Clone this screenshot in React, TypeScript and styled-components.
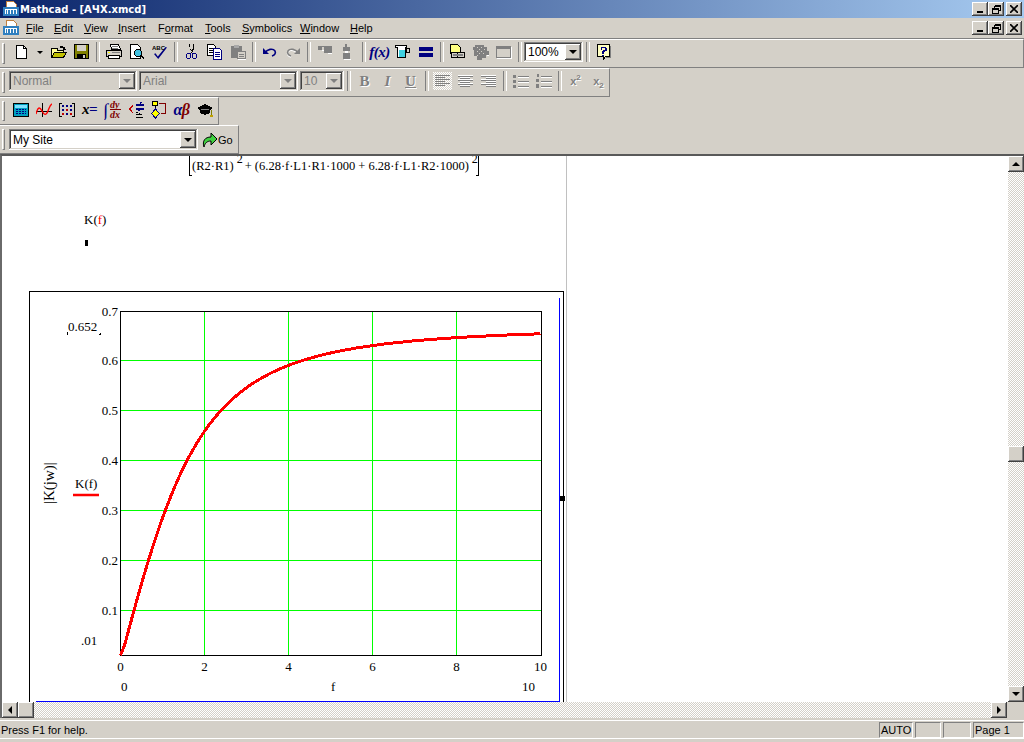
import React from 'react';
import styled, { createGlobalStyle, css } from 'styled-components';

const GlobalStyle = createGlobalStyle`
  html, body { margin: 0; padding: 0; background: #d4d0c8; overflow: hidden; }
  * { box-sizing: border-box; }
`;

const raised = css`
  box-shadow: inset -1px -1px #404040, inset 1px 1px #fff, inset -2px -2px #808080, inset 2px 2px #d4d0c8;
`;
const sunken = css`
  box-shadow: inset -1px -1px #fff, inset 1px 1px #808080, inset -2px -2px #d4d0c8, inset 2px 2px #404040;
`;
const dither = css`
  background-color: #fff;
  background-image: conic-gradient(#d4d0c8 25%, #fff 0 50%, #d4d0c8 0 75%, #fff 0);
  background-size: 2px 2px;
`;

const Window = styled.div`
  width: 1024px;
  height: 742px;
  display: flex;
  flex-direction: column;
  background: #d4d0c8;
  overflow: hidden;
  font-family: "Liberation Sans", Arial, sans-serif;
  font-size: 11px;
  color: #000;
`;

const TitleBar = styled.div`
  height: 18px;
  display: flex;
  align-items: center;
  padding: 0 2px 0 3px;
  background: linear-gradient(90deg, #0a246a, #a6caf0);
  color: #fff;
  font-family: "DejaVu Sans", sans-serif;
  font-size: 10px;
  font-weight: bold;
`;

const TitleText = styled.span`
  margin-left: 1px;
  flex: 1;
`;

const WinButtons = styled.div`
  display: flex;
`;

const WinButton = styled.div<{ $gap?: number }>`
  width: 16px;
  height: 14px;
  margin-left: ${p => p.$gap ?? 0}px;
  display: flex;
  align-items: center;
  justify-content: center;
  background: #d4d0c8;
  ${raised}
`;

const MenuBar = styled.div`
  height: 21px;
  display: flex;
  align-items: center;
  padding: 0 2px 0 3px;
  border-bottom: 1px solid #808080;
`;

const MenuIconSlot = styled.div`
  width: 23px;
  display: flex;
  flex: none;
`;

const MenuItem = styled.span<{ $w: number }>`
  width: ${p => p.$w}px;
  white-space: nowrap;
  u { text-decoration: underline; }
`;

const MenuSpacer = styled.div`
  flex: 1;
`;

const Toolbar = styled.div<{ $w?: number; $h?: number; $pb?: number }>`
  width: ${p => (p.$w ? `${p.$w}px` : '100%')};
  height: ${p => p.$h ?? 29}px;
  display: flex;
  align-items: center;
  padding-left: 9px;
  padding-bottom: ${p => p.$pb ?? 3}px;
  position: relative;
  border-top: 1px solid #fff;
  border-bottom: 1px solid #808080;
  border-right: 1px solid #808080;
`;

const Grip = styled.div`
  position: absolute;
  left: 2px;
  top: 3px;
  bottom: 3px;
  width: 3px;
  border-left: 1px solid #fff;
  border-top: 1px solid #fff;
  border-right: 1px solid #808080;
  border-bottom: 1px solid #808080;
`;

const TBtn = styled.div<{ $pressed?: boolean }>`
  width: 23px;
  height: 22px;
  display: flex;
  align-items: center;
  justify-content: center;
  flex: none;
  ${p => p.$pressed && css`
    ${dither}
    background-clip: content-box;
    padding: 2px;
  `}
`;

const DropArrow = styled.div`
  width: 15px;
  height: 22px;
  display: flex;
  align-items: center;
  justify-content: center;
  flex: none;
  &::before {
    content: '';
    border-left: 3px solid transparent;
    border-right: 3px solid transparent;
    border-top: 3px solid #000;
  }
`;

const Sep = styled.div`
  width: 9px;
  height: 22px;
  flex: none;
  position: relative;
  &::before {
    content: '';
    position: absolute;
    left: 3px;
    top: 1px;
    bottom: 1px;
    width: 2px;
    border-left: 1px solid #808080;
    border-right: 1px solid #fff;
  }
`;

const Combo = styled.div<{ $w: number; $on?: boolean; $ml?: number; $h?: number }>`
  width: ${p => p.$w}px;
  height: ${p => p.$h ?? 20}px;
  flex: none;
  margin-left: ${p => p.$ml ?? 0}px;
  display: flex;
  align-items: center;
  padding: 2px;
  background: ${p => (p.$on ? '#fff' : '#d4d0c8')};
  color: ${p => (p.$on ? '#000' : '#808080')};
  ${sunken}
`;

const ComboText = styled.span`
  flex: 1;
  padding-left: 2px;
  font-size: 12px;
  white-space: nowrap;
  overflow: hidden;
`;

const ComboArrow = styled.div<{ $on?: boolean }>`
  width: 16px;
  height: 100%;
  flex: none;
  display: flex;
  align-items: center;
  justify-content: center;
  background: #d4d0c8;
  ${raised}
  &::before {
    content: '';
    border-left: 4px solid transparent;
    border-right: 4px solid transparent;
    border-top: 4px solid ${p => (p.$on ? '#000' : '#808080')};
  }
`;

const GoLabel = styled.div`
  display: flex;
  align-items: center;
  margin-left: 4px;
`;

const FmtText = styled.span<{ $i?: boolean; $u?: boolean }>`
  font-family: "Liberation Serif", serif;
  font-size: 15px;
  font-weight: bold;
  font-style: ${p => (p.$i ? 'italic' : 'normal')};
  text-decoration: ${p => (p.$u ? 'underline' : 'none')};
  color: #808080;
  text-shadow: 1px 1px 0 #fff;
`;

const SupText = styled.span`
  font-family: "Liberation Sans", sans-serif;
  font-size: 11px;
  font-weight: bold;
  color: #808080;
  text-shadow: 1px 1px 0 #fff;
  sup, sub { font-size: 8px; line-height: 0; }
`;

const MathIconText = styled.span<{ $c?: string; $s?: number }>`
  font-family: "Liberation Serif", serif;
  font-size: ${p => p.$s ?? 15}px;
  font-weight: bold;
  font-style: italic;
  color: ${p => p.$c ?? '#000080'};
  white-space: nowrap;
  letter-spacing: -0.5px;
`;

const Tint = styled.span<{ $c: string }>`
  color: ${p => p.$c};
`;

const Workspace = styled.div`
  height: 548px;
  display: flex;
  border-top: 2px solid #595959;
  border-left: 2px solid #6a6a6a;
`;

const Sheet = styled.div`
  flex: 1;
  position: relative;
  background: #fff;
  overflow: hidden;
  font-family: "Liberation Serif", serif;
  font-size: 12.5px;
`;

const PageLine = styled.div`
  position: absolute;
  left: 564px;
  top: 0;
  bottom: 0;
  width: 1px;
  background: #c0c0c0;
`;

const Formula = styled.div`
  position: absolute;
  left: 187px;
  top: -1px;
  width: 290px;
  height: 21px;
  border-left: 1px solid #000;
  border-right: 1px solid #000;
  border-bottom: 1px solid #000;
`;

const FormulaInner = styled.div`
  position: absolute;
  left: 2px;
  top: 3px;
  width: 284px;
  height: 18px;
  white-space: nowrap;
  background: #fff;
  line-height: 17px;
  box-shadow: 0 2px 0 #fff;
`;

const FormulaPower = styled.span`
  font-size: 12px;
  position: relative;
  top: -7px;
  margin: 0 2px 0 3px;
`;

const MathLine = styled.div`
  position: absolute;
  left: 82px;
  top: 56px;
  font-size: 13px;
  em { color: #f00; font-style: normal; }
`;

const Cursor = styled.div`
  position: absolute;
  left: 83px;
  top: 84px;
  width: 3px;
  height: 6px;
  background: #000;
`;

const PlotSvg = styled.svg`
  position: absolute;
  left: 27px;
  top: 135px;
  overflow: visible;
`;

const VScroll = styled.div`
  width: 16px;
  flex: none;
  position: relative;
  ${dither}
  display: flex;
  flex-direction: column;
  justify-content: space-between;
`;

const ScrollThumb = styled.div`
  position: absolute;
  left: 0;
  top: 290px;
  width: 16px;
  height: 16px;
  background: #d4d0c8;
  ${raised}
`;

const Arrow = styled.div<{ $dir: 'up' | 'down' | 'left' | 'right' }>`
  width: 16px;
  height: 16px;
  flex: none;
  display: flex;
  align-items: center;
  justify-content: center;
  background: #d4d0c8;
  ${raised}
  &::before {
    content: '';
    ${p => p.$dir === 'up' && css`border-left: 4px solid transparent; border-right: 4px solid transparent; border-bottom: 4px solid #000;`}
    ${p => p.$dir === 'down' && css`border-left: 4px solid transparent; border-right: 4px solid transparent; border-top: 4px solid #000;`}
    ${p => p.$dir === 'left' && css`border-top: 4px solid transparent; border-bottom: 4px solid transparent; border-right: 4px solid #000;`}
    ${p => p.$dir === 'right' && css`border-top: 4px solid transparent; border-bottom: 4px solid transparent; border-left: 4px solid #000;`}
  }
`;

const ScrollStub = styled.div`
  width: 16px;
  height: 16px;
  flex: none;
  background: #d4d0c8;
  ${raised}
`;

const HRow = styled.div`
  height: 16px;
  display: flex;
  border-left: 2px solid #6a6a6a;
`;

const HTrack = styled.div`
  flex: 1;
  ${dither}
`;

const HCorner = styled.div`
  width: 17px;
  flex: none;
`;

const StatusBar = styled.div`
  margin-top: 2px;
  height: 19px;
  display: flex;
  align-items: center;
  gap: 2px;
  border-top: 1px solid #fff;
  border-bottom: 1px solid #fff;
`;

const StatusMsg = styled.div`
  flex: 1;
  padding-left: 1px;
`;

const Pane = styled.div<{ $w: number }>`
  width: ${p => p.$w}px;
  height: 16px;
  padding-left: 1px;
  line-height: 15px;
  border-top: 1px solid #808080;
  border-left: 1px solid #808080;
  border-right: 1px solid #fff;
  border-bottom: 1px solid #fff;
`;

const Px = ({ children, w = 16, h = 16 }: { children: React.ReactNode; w?: number; h?: number }) => (
  <svg width={w} height={h} viewBox={`0 0 ${w} ${h}`} shapeRendering="crispEdges">{children}</svg>
);

const MdiIcon = () => (
  <Px>
    <path d="M3.500 .5h7l3 3v4h-10z" fill="#fff" stroke="#c08040" />
    <path d="M0 6h16v9H0z" fill="#2f7fc0" />
    <path d="M2 8h12v5h-1V9h-2v4h-1V9H8v4H7V9H5v4H4V9H3v4H2z" fill="#fff" />
  </Px>
);

const NewIcon = () => (
  <Px><path d="M3.500 1.500h7l3 3v10h-10z" fill="#fff" stroke="#000" /><path d="M10.500 1.500v3h3" fill="none" stroke="#000" /></Px>
);
const OpenIcon = () => (
  <Px>
    <path d="M.5 4.500h6v2h6v7H.5z" fill="#ffff99" stroke="#000" />
    <path d="M.5 13.500l3-5h12l-3 5z" fill="#c0c000" stroke="#000" />
    <path d="M9 2h3v1h2v2h1v1h-3V4h-3z" fill="#000" />
  </Px>
);
const SaveIcon = () => (
  <Px>
    <path d="M.5 .5h14v14H.5z" fill="#808000" stroke="#000" />
    <path d="M3 1h9v6H3z" fill="#d4d0c8" />
    <path d="M3 10h9v5H3z" fill="#000" />
    <path d="M9 11h2v3H9z" fill="#d4d0c8" />
  </Px>
);
const PrintIcon = () => (
  <Px>
    <path d="M4.500 .5h8l2 5h-9z" fill="#fff" stroke="#000" />
    <path d="M.5 6.500h15v6H.5z" fill="#d4d0c8" stroke="#000" />
    <path d="M2.500 11.500h11v3h-11z" fill="#fff" stroke="#000" />
    <path d="M2 8h2v1H2z" fill="#ffff00" />
    <path d="M6 2h6v1H6zM6 4h6v1H6zM6 8h8v1H6z" fill="#808080" />
  </Px>
);
const PreviewIcon = () => (
  <Px>
    <path d="M1.500 .5h7l3 3v11h-10z" fill="#fff" stroke="#000" />
    <circle cx="9" cy="9" r="3.500" fill="#40c0e0" stroke="#000" />
    <path d="M11 11l1 0 3 3v1h-1l-3-3z" fill="#000" />
  </Px>
);
const SpellIcon = () => (
  <svg width="16" height="16" viewBox="0 0 16 16">
    <path d="M2 10l1.500-.8 2.300 3.300L13.500 3l1.500.6-8.800 11.400z" fill="#000080" />
    <text x="0" y="6" fontFamily="Liberation Sans" fontSize="6" fontWeight="bold" fill="#000">ABC</text>
  </svg>
);
const CutIcon = () => (
  <Px>
    <path d="M5 0h1v4l1 2h1l1-2V0h1v5L9 8v1h0L6 5z" fill="#000" />
    <path d="M7 8h1v1h-1z" fill="#000" />
    <circle cx="4.500" cy="12" r="2.500" fill="none" stroke="#000080" />
    <circle cx="10.500" cy="12" r="2.500" fill="none" stroke="#000080" />
    <path d="M6 9h1v1H6zM8 9h1v1H8z" fill="#000080" />
  </Px>
);
const CopyIcon = () => (
  <Px>
    <path d="M.5 .5h6l2 2v9h-8z" fill="#fff" stroke="#000" />
    <path d="M2 4h4v1H2zM2 6h4v1H2zM2 8h4v1H2z" fill="#000" />
    <path d="M6.500 4.500h6l2 2v9h-8z" fill="#fff" stroke="#000080" />
    <path d="M8 8h5v1H8zM8 10h5v1H8zM8 12h5v1H8z" fill="#000080" />
  </Px>
);
const PasteIcon = () => (
  <Px>
    <path d="M1 2h11v12H1z" fill="#808080" />
    <path d="M4 1h5v3H4z" fill="#a8a8a8" />
    <path d="M7.500 7.500h8v7h-8z" fill="#d4d0c8" stroke="#808080" />
    <path d="M9 10h5v1H9zM9 12h5v1H9z" fill="#808080" />
    <path d="M8 15h8v1H8z" fill="#fff" />
  </Px>
);
const UndoIcon = () => (
  <svg width="16" height="16" viewBox="0 0 16 16" fill="none">
    <path d="M3 9c2-4 8-5 10-2 1 2 0 4-3 5" stroke="#000080" strokeWidth="1.600" />
    <path d="M1 4v6h6z" fill="#000080" />
  </svg>
);
const RedoIcon = () => (
  <svg width="16" height="16" viewBox="0 0 16 16" fill="none">
    <path d="M13 10c-2-4-8-5-10-2-1 2 0 4 3 5" stroke="#fff" strokeWidth="1.600" />
    <path d="M13 9c-2-4-8-5-10-2-1 2 0 4 3 5" stroke="#808080" strokeWidth="1.600" />
    <path d="M15 4v6H9z" fill="#808080" />
  </svg>
);
const AlignAIcon = () => (
  <Px>
    <path d="M1 2h4v4H1zM7 2h8v7H7z" fill="#808080" />
    <path d="M5 6h2v1H5zM11 9h4v1h-4z" fill="#fff" />
    <path d="M5 2h2v1H5z" fill="#808080" />
  </Px>
);
const AlignBIcon = () => (
  <Px>
    <path d="M5 0h2v3H5zM3 3h7v4H3zM3 9h7v6H3z" fill="#808080" />
    <path d="M5 7h3v2H5z" fill="#fff" />
    <path d="M4 15h7v1H4z" fill="#fff" />
  </Px>
);
const UnitsIcon = () => (
  <Px>
    <path d="M.5 1.500h11v2h-1v10h-8v-10h-2z" fill="#fff" stroke="#000" />
    <path d="M4 6h6v7H4z" fill="#40d0e0" />
    <path d="M11.500 4.500h3v4h-3z" fill="none" stroke="#000" />
  </Px>
);
const EqualsIcon = () => (
  <Px><path d="M1 3h14v4H1zM1 9h14v4H1z" fill="#000080" /></Px>
);
const LinkIcon = () => (
  <Px>
    <path d="M.5 .5h7l3 3v6h-10z" fill="#ffff80" stroke="#000" />
    <path d="M1.500 8.500h6v5h-6zM7.500 8.500h7v5h-7z" fill="#d4d0c8" stroke="#000" />
    <path d="M3 10h10v2H3z" fill="#808080" />
  </Px>
);
const CompIcon = () => (
  <Px>
    <path d="M2 1h9v2h3v4h2v4h-3v3H9v2H4v-4H1V6H0V3h2z" fill="#808080" />
    <path d="M4 3h1v1H4zM6 5h1v1H6zM8 3h1v1H8zM4 7h1v1H4zM8 7h1v1H8zM6 9h1v1H6zM10 9h1v1h-1zM4 11h1v1H4zM11 5h1v1h-1z" fill="#d4d0c8" />
    <path d="M14 11h2v1h-2z" fill="#fff" />
  </Px>
);
const WinIcon = () => (
  <Px>
    <path d="M.5 2.500h14v11H.5z" fill="#d4d0c8" stroke="#808080" />
    <path d="M1 3h13v2H1z" fill="#808080" />
    <path d="M1 14h15v1H1zM15 3h1v12h-1z" fill="#fff" />
  </Px>
);
const HelpIcon = () => (
  <Px>
    <path d="M1.500 .5h12v12h-4l-2 3v-3h-6z" fill="#ffffc0" stroke="#000" />
    <path d="M14 2h1v12h-5v-1h4z" fill="#808080" />
    <path d="M5 3h5v1h1v3h-2v1H8v2H6V7h1V6h2V4H6v2H5zM6 11h2v1H6z" fill="#000080" />
  </Px>
);
const BulletIcon = () => (
  <Px>
    <path d="M0 2h3v3H0zM0 7h3v3H0zM0 12h3v3H0z" fill="#808080" />
    <path d="M5 3h11v1H5zM5 8h11v1H5zM5 13h11v1H5z" fill="#808080" />
    <path d="M5 4h11v1H5zM5 9h11v1H5zM5 14h11v1H5z" fill="#fff" />
  </Px>
);
const NumberIcon = () => (
  <Px>
    <path d="M1 1h2v3H1zM0 6h3v3H0zM0 11h3v4H0z" fill="#808080" />
    <path d="M5 3h11v1H5zM5 8h11v1H5zM5 13h11v1H5z" fill="#808080" />
    <path d="M5 4h11v1H5zM5 9h11v1H5zM5 14h11v1H5z" fill="#fff" />
  </Px>
);
const TextAlignIcon = ({ kind, flat }: { kind: 'l' | 'c' | 'r'; flat?: boolean }) => (
  <Px>
    {[15, 10, 15, 10, 15, 10].map((w, i) => {
      const x = kind === 'l' ? 0 : kind === 'r' ? 15 - w : Math.floor((15 - w) / 2);
      return (
        <React.Fragment key={i}>
          <rect x={x} y={2 + i * 2} width={w} height={1} fill={flat ? '#808080' : '#fff'} />
          {!flat && <rect x={x} y={3 + i * 2} width={w} height={1} fill="#808080" />}
        </React.Fragment>
      );
    })}
  </Px>
);

const CalcIcon = () => (
  <Px>
    <path d="M.5 1.500h15v13H.5z" fill="#00a0c0" stroke="#000" />
    <path d="M2 3h12v3H2z" fill="#80e0ff" />
    <path d="M3 7h2v1H3zM6 7h2v1H6zM9 7h2v1H9zM12 7h1v1h-1zM3 9h2v1H3zM6 9h2v1H6zM9 9h2v1H9zM12 9h1v1h-1zM3 11h2v1H3zM6 11h2v1H6zM9 11h2v1H9zM12 11h1v1h-1z" fill="#000080" />
  </Px>
);
const GraphIcon = () => (
  <svg width="16" height="16" viewBox="0 0 16 16" fill="none">
    <path d="M6.500 1v14M0 9.500h16" stroke="#000" strokeWidth="1" />
    <path d="M0 12c2-8 4-7 6-3s4 5 6 0 2-6 4-7" stroke="#f00" strokeWidth="1.400" />
  </svg>
);
const MatrixIcon = () => (
  <Px>
    <path d="M3 1H0v14h3v-1H1V2h2zM13 1h3v14h-3v-1h2V2h-2z" fill="#000" />
    <path d="M3 3h2v2H3zM7 3h2v2H7zM11 3h2v2h-2zM3 7h2v2H3zM11 7h2v2h-2zM7 11h2v2H7z" fill="#000080" />
    <path d="M7 7h2v2H7zM3 11h2v2H3zM11 11h2v2h-2z" fill="#c00000" />
  </Px>
);
const CalculusIcon = () => (
  <svg width="18" height="20" viewBox="0 0 18 20" fontFamily="Liberation Serif" fontStyle="italic" fontWeight="bold">
    <text x="-1" y="16" fontSize="18" fill="#000080">∫</text>
    <text x="6" y="8" fontSize="10" fill="#800000">dy</text>
    <path d="M6 9.500h11" stroke="#800000" />
    <text x="6" y="18" fontSize="10" fill="#800000">dx</text>
  </svg>
);
const CompareIcon = () => (
  <Px w={16} h={18}>
    <path d="M5 4H4v1H3v1H2v1H1v2h1v1h1v1h1v1h1v-1H4V9H3V7h1V6h1z" fill="#c00000" />
    <path d="M8 3h8v2H8zM8 7h8v2H8zM12 1h2v1h-1v1h-1zM10 9h2v1h-2z" fill="#000080" />
    <path d="M8 11h2v1h2v1h2v1h-6v-1h3v-1H8zM8 16h7v1H8z" fill="#000" />
  </Px>
);
const ProgramIcon = () => (
  <Px w={16} h={18}>
    <path d="M1.500 .5h5v4h-5z" fill="#ffff00" stroke="#000" />
    <path d="M4 5h1v3H4z" fill="#000" />
    <path d="M4.500 8l4 4.500-4 4.500-4-4.500z" fill="#ffff00" stroke="#000080" />
    <path d="M8 2h7v11H10v-1h4V3H8z" fill="#800000" />
  </Px>
);
const HatIcon = () => (
  <Px>
    <path d="M8 2l8 4-3 2v3l-5 2-5-2V8L0 6z" fill="#000" />
    <path d="M4 7h8v1H4z" fill="#808080" />
    <path d="M14 8h1v6h-1z" fill="#808000" />
    <path d="M13 13h3v2h-3z" fill="#c0a000" />
  </Px>
);
const GoIcon = () => (
  <svg width="16" height="18" viewBox="0 0 16 18">
    <path d="M2 16C0 10 3 6 9 6V2l6 6-6 6v-4c-4 0-6 2-7 6z" fill="#40d040" stroke="#000" strokeWidth="1" />
  </svg>
);

const MenuNames: [string, string, string, number][] = [
  ['', 'F', 'ile', 28], ['', 'E', 'dit', 30], ['', 'V', 'iew', 34], ['', 'I', 'nsert', 40],
  ['F', 'o', 'rmat', 47], ['', 'T', 'ools', 37], ['', 'S', 'ymbolics', 58], ['', 'W', 'indow', 50], ['', 'H', 'elp', 30],
];

const WinControls = () => (
  <WinButtons>
    <WinButton>
      <Px w={8} h={8}><path d="M1 6h6v2H1z" fill="#000" /></Px>
    </WinButton>
    <WinButton>
      <Px w={9} h={9}><path d="M2.500 .5h6v5h-2M2.500 .5v2M2 1h6" fill="none" stroke="#000" /><path d="M.5 3.500h6v5h-6z" fill="none" stroke="#000" /><path d="M1 4h5" stroke="#000" /></Px>
    </WinButton>
    <WinButton $gap={2}>
      <svg width="8" height="8" viewBox="0 0 8 8"><path d="M0 0l8 8M8 0L0 8" stroke="#000" strokeWidth="1.600" /></svg>
    </WinButton>
  </WinButtons>
);

const PlotFrame = () => {
  // screen coords of the plot, the svg sits at (29,291)
  const ox = 29;
  const oy = 291;
  const xAt = (f: number) => 120.5 + f * 42 - ox;
  const yAt = (v: number) => 655.5 - (v - 0.01) * 500 - oy;
  const K = (f: number) => Math.max(0.01, 0.668 / Math.sqrt(1 + (2.12 / Math.max(f, 0.001)) ** 2));
  const pts: string[] = [];
  for (let f = 0; f <= 10; f += 0.1) pts.push(`${xAt(f).toFixed(1)},${yAt(K(f)).toFixed(1)}`);
  const yLabels: [string, number][] = [['0.7', 311], ['0.6', 360], ['0.5', 410], ['0.4', 460], ['0.3', 510], ['0.2', 560], ['0.1', 610]];
  const font = { fontFamily: '"Liberation Serif", serif', fontSize: 13, fill: '#000' };
  return (
    <PlotSvg width={540} height={412}>
      <g shapeRendering="crispEdges">
        <path d="M.5 411V.5H534.500V411" fill="none" stroke="#000" />
        <rect x={530} y={7} width={1} height={404} fill="#0000ff" />
        <rect x={7} y={410} width={524} height={1} fill="#0000ff" />
        <rect x={531} y={205} width={5} height={5} fill="#000" />
        {[204, 288, 372, 456].map(x => <rect key={x} x={x - ox} y={20} width={1} height={345} fill="#00ff00" />)}
        {[360, 410, 460, 510, 560, 610].map(y => <rect key={y} x={91} y={y - oy} width={421} height={1} fill="#00ff00" />)}
        <path d="M91.500 20.500H512.500V364.500H91.500z" fill="none" stroke="#000" />
      </g>
      <polyline points={pts.join(' ')} fill="none" stroke="#f00" strokeWidth="3" shapeRendering="crispEdges" />
      {yLabels.map(([t, y]) => <text key={t} x={89} y={y - oy + 5} textAnchor="end" {...font}>{t}</text>)}
      {[0, 2, 4, 6, 8, 10].map(v => <text key={v} x={xAt(v)} y={380} textAnchor="middle" {...font}>{v}</text>)}
      <text x={39} y={40} {...font}>0.652</text>
      <path d="M38 41v2h1M70 43h1v-1" fill="none" stroke="#000" shapeRendering="crispEdges" />
      <text x={52} y={354} {...font}>.01</text>
      <text x={92} y={400} {...font}>0</text>
      <text x={302} y={400} {...font}>f</text>
      <text x={493} y={400} {...font}>10</text>
      <text x={46} y={197} {...font}>K(f)</text>
      <path d="M44 204H70" stroke="#f00" strokeWidth="2.500" />
      <text transform="translate(25 213) rotate(-90)" {...font} fontSize={15}>|K(jw)|</text>
    </PlotSvg>
  );
};

const App = () => (
  <Window>
    <GlobalStyle />
    <TitleBar>
      <MdiIcon />
      <TitleText>Mathcad - [АЧХ.xmcd]</TitleText>
      <WinControls />
    </TitleBar>
    <MenuBar>
      <MenuIconSlot><MdiIcon /></MenuIconSlot>
      {MenuNames.map(([a, u, b, w]) => (
        <MenuItem key={a + u + b} $w={w}>{a}<u>{u}</u>{b}</MenuItem>
      ))}
      <MenuSpacer />
      <WinControls />
    </MenuBar>

    <Toolbar>
      <Grip />
      <TBtn><NewIcon /></TBtn>
      <DropArrow />
      <TBtn><OpenIcon /></TBtn>
      <TBtn><SaveIcon /></TBtn>
      <Sep />
      <TBtn><PrintIcon /></TBtn>
      <TBtn><PreviewIcon /></TBtn>
      <TBtn><SpellIcon /></TBtn>
      <Sep />
      <TBtn><CutIcon /></TBtn>
      <TBtn><CopyIcon /></TBtn>
      <TBtn><PasteIcon /></TBtn>
      <Sep />
      <TBtn><UndoIcon /></TBtn>
      <TBtn><RedoIcon /></TBtn>
      <Sep />
      <TBtn><AlignAIcon /></TBtn>
      <TBtn><AlignBIcon /></TBtn>
      <Sep />
      <TBtn><MathIconText>f(x)</MathIconText></TBtn>
      <TBtn><UnitsIcon /></TBtn>
      <TBtn><EqualsIcon /></TBtn>
      <Sep />
      <TBtn><LinkIcon /></TBtn>
      <TBtn><CompIcon /></TBtn>
      <TBtn><WinIcon /></TBtn>
      <Sep />
      <Combo $w={59} $on><ComboText>100%</ComboText><ComboArrow $on /></Combo>
      <Sep />
      <TBtn><HelpIcon /></TBtn>
    </Toolbar>

    <Toolbar $w={610}>
      <Grip />
      <Combo $w={128}><ComboText>Normal</ComboText><ComboArrow /></Combo>
      <Combo $w={159} $ml={2}><ComboText>Arial</ComboText><ComboArrow /></Combo>
      <Combo $w={44} $ml={2}><ComboText>10</ComboText><ComboArrow /></Combo>
      <Sep />
      <TBtn><FmtText>B</FmtText></TBtn>
      <TBtn><FmtText $i>I</FmtText></TBtn>
      <TBtn><FmtText $u>U</FmtText></TBtn>
      <Sep />
      <TBtn $pressed><TextAlignIcon kind="l" flat /></TBtn>
      <TBtn><TextAlignIcon kind="c" /></TBtn>
      <TBtn><TextAlignIcon kind="r" /></TBtn>
      <Sep />
      <TBtn><BulletIcon /></TBtn>
      <TBtn><NumberIcon /></TBtn>
      <Sep />
      <TBtn><SupText>x<sup>2</sup></SupText></TBtn>
      <TBtn><SupText>x<sub>2</sub></SupText></TBtn>
    </Toolbar>

    <Toolbar $w={219} $h={28}>
      <Grip />
      <TBtn><CalcIcon /></TBtn>
      <TBtn><GraphIcon /></TBtn>
      <TBtn><MatrixIcon /></TBtn>
      <TBtn><MathIconText $c="#000">x<Tint $c="#000080">=</Tint></MathIconText></TBtn>
      <TBtn><CalculusIcon /></TBtn>
      <TBtn><CompareIcon /></TBtn>
      <TBtn><ProgramIcon /></TBtn>
      <TBtn><MathIconText $s={16}>α<Tint $c="#800000">β</Tint></MathIconText></TBtn>
      <TBtn><HatIcon /></TBtn>
    </Toolbar>

    <Toolbar $w={239} $pb={0}>
      <Grip />
      <Combo $w={189} $h={21} $on><ComboText>My Site</ComboText><ComboArrow $on /></Combo>
      <GoLabel><GoIcon />Go</GoLabel>
    </Toolbar>

    <Workspace>
      <Sheet>
        <PageLine />
        <Formula>
          <FormulaInner>(R2·R1)<FormulaPower>2</FormulaPower>+ (6.28·f·L1·R1·1000 + 6.28·f·L1·R2·1000)<FormulaPower>2</FormulaPower></FormulaInner>
        </Formula>
        <MathLine>K(<em>f</em>)</MathLine>
        <Cursor />
        <PlotFrame />
      </Sheet>
      <VScroll>
        <Arrow $dir="up" />
        <ScrollThumb />
        <Arrow $dir="down" />
      </VScroll>
    </Workspace>
    <HRow>
      <Arrow $dir="left" />
      <ScrollStub />
      <HTrack />
      <Arrow $dir="right" />
      <HCorner />
    </HRow>
    <StatusBar>
      <StatusMsg>Press F1 for help.</StatusMsg>
      <Pane $w={34}>AUTO</Pane>
      <Pane $w={26} />
      <Pane $w={28} />
      <Pane $w={51}>Page 1</Pane>
    </StatusBar>
  </Window>
);

export default App;
